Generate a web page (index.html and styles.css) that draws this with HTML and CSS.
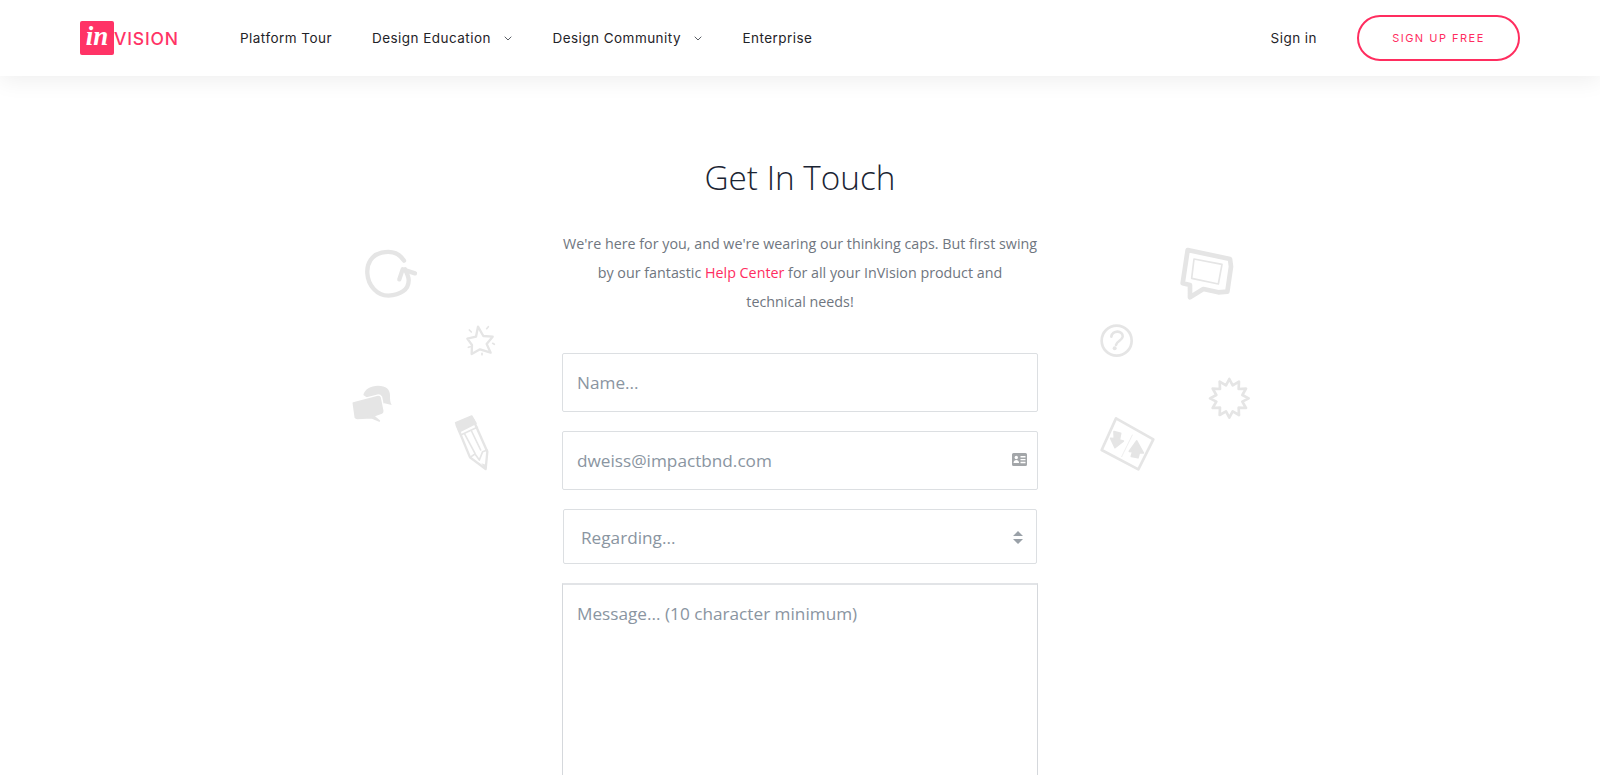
FILE: index.html
```html
<!DOCTYPE html>
<html lang="en">
<head>
    <meta charset="UTF-8">
    <meta name="viewport" content="width=device-width, initial-scale=1.0">
    <title>Get In Touch - InVision</title>
    <link rel="stylesheet" href="styles.css">
</head>
<body>
    <header class="topbar">
        <a class="logo" href="#">
            <span class="logo-box">in</span>
            <span class="logo-text">VISION</span>
        </a>
        <nav class="nav">
            <a href="#">Platform Tour</a>
            <a href="#">Design Education
                <svg class="chevron" viewBox="0 0 8 5"><path d="M.7.7 4 4 7.3.7"/></svg>
            </a>
            <a href="#">Design Community
                <svg class="chevron" viewBox="0 0 8 5"><path d="M.7.7 4 4 7.3.7"/></svg>
            </a>
            <a href="#">Enterprise</a>
        </nav>
        <a class="signin" href="#">Sign in</a>
        <a class="signup" href="#">SIGN UP FREE</a>
    </header>

    <main class="contact">
        <!-- doodles either side of the form -->
        <svg class="doodles doodles-left" viewBox="0 0 540 750">
            <path class="line thick" d="M192 92C175 65 150 62 125 68 95 75 80 100 82 130c2 35 28 67 63 67 35-2 62-17 61-47 0-10-6-22-11-32"/>
            <path class="line thick" d="M178 148l10-30 37 12"/>
            <path class="line mid" d="M414 290l16 28 28 2-18 22 12 26-32-10-25 14 1-27-14-19 26-6z"/>
            <path class="line fine" d="M388 300l6 6M440 296l5-6M458 340l5 3M385 352l6-2M426 370v4"/>
            <g transform="translate(0 420)">
                <path class="solid" d="M70 75c4-18 22-27 44-28 24 0 36 10 36 30 0 10 0 18 5 28l-22-5-20 5z"/>
                <path class="bubble-gap" d="M40 99l74-19c3 0 5 1 6 3l8 40c0 3-1 5-3 6l-25 9 18 15-23-10-43 2c-3 0-5-1-6-3z"/>
                <path class="solid round" d="M40 99l74-19c3 0 5 1 6 3l8 40c0 3-1 5-3 6l-25 9 18 15-23-10-43 2c-3 0-5-1-6-3z"/>
                <path class="line mid" d="M350 165l40 97 47 35 5-52-42-95z"/>
                <path class="solid round" d="M347 158l48-20 13 22-50 25z"/>
                <path class="line fine" d="M362 195l50-23M373 190l32 60M393 180l29 60M390 262l15-10 13 18 10-25 14-5"/>
                <path class="solid" d="M424 280l14 4-1 13z"/>
            </g>
        </svg>
        <svg class="doodles doodles-right" viewBox="0 0 540 735">
            <path class="line heavy" d="M293 45l127 27 3 23-11 75-27 2-45-10-40 25v-37l-22-5z"/>
            <path class="line fine" d="M312 72l84 16-11 59-80-17z"/>
            <circle class="line wide" cx="80" cy="317" r="45"/>
            <path class="line wide" d="M64 305c2-20 36-20 34 0-2 13-18 13-20 25"/>
            <circle class="dot" cx="74" cy="340" r="6"/>
            <g transform="translate(0 405)">
                <path class="line wide" d="M476 85l-19-10 11-19-22 1 1-22-19 11-10-19-10 19-19-11 1 22-22-1 11 19-19 10 19 10-11 19 22-1-1 22 19-11 10 19 10-19 19 11-1-22 22 1-11-19 19-10z"/>
                <path class="line wide" d="M78 145l112 63-45 90-110-58z"/>
                <path class="line hair" d="M127 195l-32 65"/>
                <path class="solid round" d="M72 185l20 5-4 20 12 3-25 20-13-28 11 1z"/>
                <path class="solid round" d="M140 213l20 36-12-1-4 15-20-4 4-14-10-1z"/>
            </g>
        </svg>

        <h1>Get In Touch</h1>
        <p class="intro">We're here for you, and we're wearing our thinking caps. But first swing<br>by our fantastic <a href="#">Help Center</a> for all your InVision product and<br>technical needs!</p>

        <form class="contact-form">
            <input class="field" type="text" placeholder="Name...">
            <div class="field-wrap">
                <input class="field" type="email" placeholder="dweiss@impactbnd.com">
                <svg class="card-icon" viewBox="0 0 15 13">
                    <path d="M1.5 0h12A1.5 1.5 0 0 1 15 1.500v10a1.500 1.500 0 0 1-1.500 1.500h-12A1.500 1.500 0 0 1 0 11.500v-10A1.500 1.500 0 0 1 1.500 0z"/>
                    <circle class="card-cut" cx="4.300" cy="4.500" r="1.700"/>
                    <path class="card-cut" d="M1.500 10c0-4 5.600-4 5.600 0zM8.500 3h5v1.400h-5zM8.500 5.900h5v1.400h-5zM8.500 8.800h5v1.400h-5z"/>
                </svg>
            </div>
            <div class="select-wrap">
                <select class="select">
                    <option>Regarding...</option>
                </select>
                <svg class="sort-icon" viewBox="0 0 10 13"><path d="M5 0l5 5H0zM0 8h10l-5 5z"/></svg>
            </div>
            <textarea class="message" placeholder="Message... (10 character minimum)"></textarea>
        </form>
    </main>
</body>
</html>
```

FILE: styles.css
```css
html, body {
    overflow: hidden;
}

body {
    margin: 0;
    font-family: "Open Sans", sans-serif;
    background-color: #fff;
}

a {
    text-decoration: none;
}

.topbar {
    position: relative;
    z-index: 2;
    display: flex;
    align-items: center;
    height: 76px;
    padding: 0 80px;
    background-color: #fff;
    box-shadow: 0 4px 22px rgba(0, 0, 0, 0.07);
    font-family: Inter, sans-serif;
    font-size: 13.5px;
    letter-spacing: 0.46px;
}

.logo {
    display: flex;
    flex: none;
    align-items: center;
    width: 98px;
    color: #ff3366;
}

.logo-box {
    flex: none;
    width: 34px;
    height: 34px;
    border-radius: 2px;
    background-color: #ff3366;
    color: #fff;
    font: italic bold 27px/30px "Liberation Serif", serif;
    letter-spacing: 0;
    text-align: center;
}

.logo-text {
    font-family: Inter, sans-serif;
    font-size: 17.5px;
    font-weight: 500;
    letter-spacing: 0.8px;
}

.nav {
    display: flex;
    align-items: center;
    gap: 40px;
    margin-left: 62px;
}

.nav a {
    display: flex;
    align-items: center;
    color: #1f2328;
}

.chevron {
    width: 8px;
    height: 5px;
    margin-left: 13.5px;
    fill: none;
    stroke: #5a5f66;
    stroke-width: 1;
}

.signin {
    margin-left: auto;
    color: #1f2328;
}

.signup {
    display: flex;
    align-items: center;
    justify-content: center;
    box-sizing: border-box;
    width: 163px;
    height: 46px;
    margin-left: 40px;
    border: 2px solid #ff2d5f;
    border-radius: 23px;
    color: #ff2d5f;
    font-size: 11px;
    letter-spacing: 1.5px;
}

.contact {
    position: relative;
    width: 476px;
    margin: 0 auto;
    padding-top: 77px;
}

.doodles {
    position: absolute;
    width: 180px;
}

.doodles-left {
    left: -222px;
    top: 154px;
    height: 250px;
}

.doodles-right {
    left: 528px;
    top: 159px;
    height: 245px;
}

.line {
    fill: none;
    stroke: #e5e5e5;
    stroke-linejoin: round;
    stroke-linecap: round;
}

.heavy {
    stroke-width: 14;
}

.thick {
    stroke-width: 13;
}

.wide {
    stroke-width: 8;
}

.mid {
    stroke-width: 7;
}

.fine {
    stroke-width: 5;
}

.hair {
    stroke-width: 2;
}

.solid, .dot {
    fill: #e5e5e5;
}

.round {
    stroke: #e5e5e5;
    stroke-width: 5;
    stroke-linejoin: round;
}

.bubble-gap {
    fill: #fff;
    stroke: #fff;
    stroke-width: 14;
    stroke-linejoin: round;
}

h1 {
    margin: 0;
    color: #1a2433;
    font-size: 33.3px;
    font-weight: 300;
    line-height: 48px;
    text-align: center;
}

.intro {
    margin: 28px 0 0;
    color: #6f7680;
    font-size: 14.3px;
    line-height: 29px;
    text-align: center;
    white-space: nowrap;
}

.intro a {
    color: #ff2d5f;
}

.contact-form {
    display: flex;
    flex-direction: column;
    margin-top: 37px;
}

.field, .select, .message {
    display: block;
    box-sizing: border-box;
    width: 100%;
    padding: 0 14px;
    border: 1px solid #dcdfe2;
    border-radius: 2px;
    outline: none;
    background-color: #fff;
    color: #8a95a1;
    font-family: "Open Sans", sans-serif;
    font-size: 17.2px;
}

.field {
    height: 59px;
    margin-bottom: 19px;
}

.field::placeholder, .message::placeholder {
    color: #8a95a1;
    opacity: 1;
}

.field-wrap {
    position: relative;
}

.card-icon {
    position: absolute;
    right: 11px;
    top: 22px;
    width: 15px;
    height: 13px;
    fill: #a3a6a9;
}

.card-cut {
    fill: #fff;
}

.select-wrap {
    position: relative;
    margin: 0 1px 19px;
}

.select {
    height: 55px;
    padding-top: 1px;
    padding-left: 17px;
    appearance: none;
}

.sort-icon {
    position: absolute;
    right: 14px;
    top: 22px;
    width: 10px;
    height: 13px;
    fill: #9aa1a8;
}

.message {
    height: 320px;
    padding-top: 17px;
    border-color: #e2e4e7 #d5d8dc #d5d8dc;
    border-width: 2px 1px 1px;
    border-radius: 0;
    resize: none;
}
```
